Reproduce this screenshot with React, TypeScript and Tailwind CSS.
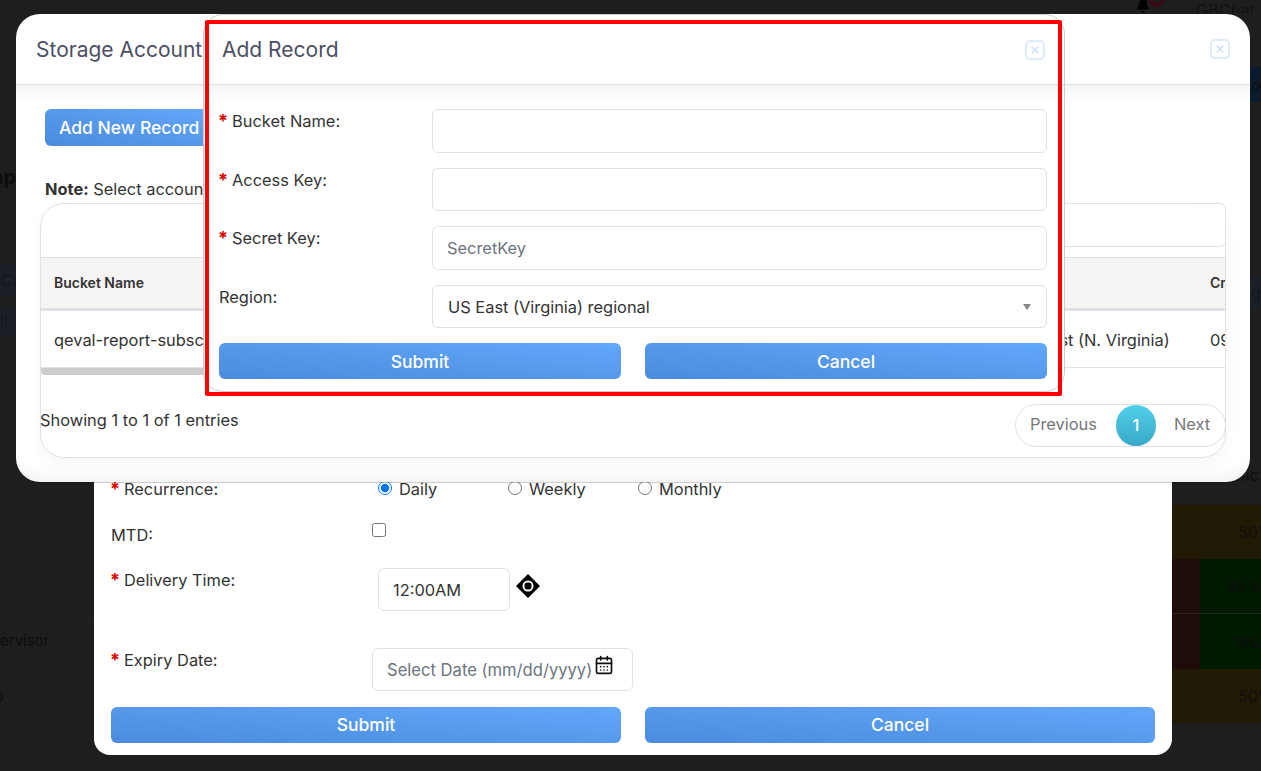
import React from 'react';
import { Bell, CalendarDays, X } from 'lucide-react';

const inputClass =
  'h-[43.5px] w-full rounded-md border border-[#dee2e6] bg-white px-[14px] text-[16.4px] text-[#333] placeholder:text-[#6c757d] outline-none';
const primaryButton =
  'rounded-md bg-linear-to-tr from-[#4a8bdc] to-[#62a8fb] text-[17.5px] leading-none font-medium text-white';

const Required: React.FC = () => (
  <span className="w-[13px] shrink-0 -translate-x-px text-[18px] leading-6 font-bold text-[#e00000]">*</span>
);

const CloseButton: React.FC = () => (
  <button className="flex h-5 w-5 items-center justify-center rounded-[5px] border-2 border-[#deebfb]">
    <X size={12} strokeWidth={3.5} className="text-[#cfe2fa]" />
  </button>
);

const FormRow: React.FC<{ label: string; required?: boolean; children: React.ReactNode }> = ({
  label,
  required,
  children,
}) => (
  <div className="mb-[15px] flex">
    <div className="flex w-[213px] shrink-0 leading-6">
      {required && <Required />}
      <span>{label}:</span>
    </div>
    <div className="flex-1">{children}</div>
  </div>
);

const RadioOption: React.FC<{ label: string; checked?: boolean }> = ({ label, checked }) => (
  <label className="flex w-[130px] items-start gap-[7px] leading-6">
    <input type="radio" name="recurrence" defaultChecked={checked} className="mt-[4px] h-[14px] w-[14px]" />
    {label}
  </label>
);

const MoveIcon: React.FC = () => (
  <svg width="24" height="24" viewBox="0 0 24 24" className="mt-[6px] ml-[6px] shrink-0">
    <path d="M12 0l7 7H5zM12 24l-7-7h14zM0 12l7-7v14zM24 12l-7 7V5z" fill="#000" />
    <circle cx="12" cy="12" r="8" fill="#000" />
    <circle cx="12" cy="12" r="5.5" fill="#fff" />
    <rect x="8.5" y="8.5" width="7" height="7" rx="2.5" fill="#000" />
  </svg>
);

// Dimmed page behind the modals, only its edges stay visible
const BackgroundPage: React.FC = () => (
  <div className="flex h-full flex-col text-[#0d0d0d]">
    <div className="flex h-[14px] shrink-0 items-start justify-end overflow-hidden">
      <div className="relative mr-[46px] -mt-[1px]">
        <Bell size={14} fill="#000" className="text-black" />
        <span className="absolute -top-[8px] left-[13px] h-[16px] w-[16px] rounded-full border-[4px] border-[#3a0a14] bg-[#1e1e1e]" />
      </div>
      <span className="-mt-[2px] mr-[6px] text-[16.4px] leading-6 text-[#111]">GBChat</span>
    </div>
    <div className="flex flex-1 justify-between">
      <div className="w-[94px] overflow-hidden">
        <div className="mt-[151px] flex w-4 justify-end overflow-hidden text-[20px] leading-6 font-bold">ap</div>
        <div className="mt-[76px] h-[31px] w-10 bg-[#1b2027] pl-px text-base leading-[31px] text-[#10161e]">Ca</div>
        <div className="mt-[10px] h-[31px] w-10 bg-[#1b2027] text-base leading-[31px] text-[#10161e]">ll</div>
        <div className="mt-[281px] border-t border-[#232323] pt-[10px] text-[15px] leading-6">ervisor</div>
        <div className="mt-[31px] -ml-[6px] text-base leading-6">o</div>
      </div>
      <div className="w-[89px] overflow-hidden text-base leading-6 whitespace-nowrap">
        <div className="mt-[53px] flex h-[35px] items-center justify-end bg-[#0b1a2c] text-[#0f0f0f]">o</div>
        <div className="mt-[175px] flex h-[31px] items-center justify-end bg-[#1b2027] text-[#10161e]">g</div>
        <div className="mt-[155px] h-6 pl-[64px]">ific</div>
        <div className="mt-[18px] flex h-[54px] items-center bg-[#211a05] pl-[66px] text-[#0f0f0f]">50%</div>
        <div className="flex h-[55px] border-b border-[#252525]">
          <div className="w-[28px] bg-[#1f0b09]" />
          <div className="flex flex-1 items-center overflow-hidden bg-[#001a00] pl-[26px]">98.8%</div>
        </div>
        <div className="flex h-[55px]">
          <div className="w-[28px] bg-[#1f0b09]" />
          <div className="flex flex-1 items-center overflow-hidden bg-[#001a00] pl-[33px]">100%</div>
        </div>
        <div className="flex h-[54px] items-center bg-[#211a05] pl-[66px] text-[#0f0f0f]">50%</div>
      </div>
    </div>
  </div>
);

const SubscriptionModal: React.FC = () => (
  <div className="absolute top-[440px] left-[94px] h-[315px] w-[1078px] rounded-b-2xl bg-white pt-[37px] pl-[17px] text-[16.4px] text-[#333]">
    <div className="flex h-6">
      <div className="flex w-[267px] shrink-0">
        <Required />
        <span>Recurrence:</span>
      </div>
      <RadioOption label="Daily" checked />
      <RadioOption label="Weekly" />
      <RadioOption label="Monthly" />
    </div>
    <div className="mt-[22px] flex h-6">
      <div className="w-[261px] shrink-0 leading-6">MTD:</div>
      <input type="checkbox" className="h-[14px] w-[14px]" />
    </div>
    <div className="mt-[21px] flex">
      <div className="flex w-[267px] shrink-0 leading-6">
        <Required />
        <span>Delivery Time:</span>
      </div>
      <input defaultValue="12:00AM" className={`${inputClass} !h-[43px] !w-[132px]`} />
      <MoveIcon />
    </div>
    <div className="mt-[37px] flex">
      <div className="flex w-[261px] shrink-0 leading-6">
        <Required />
        <span>Expiry Date:</span>
      </div>
      <div className="relative w-[261px]">
        <input placeholder="Select Date (mm/dd/yyyy)" className={`${inputClass} !h-[43px] !pr-0 !text-[16.6px]`} />
        <CalendarDays size={20} strokeWidth={2} className="absolute top-[7px] left-[222px] text-[#111]" />
      </div>
    </div>
    <div className="mt-4 flex gap-6">
      <button className={`${primaryButton} h-9 w-[510px]`}>Submit</button>
      <button className={`${primaryButton} h-9 w-[510px]`}>Cancel</button>
    </div>
  </div>
);

const StorageAccountModal: React.FC = () => (
  <div className="absolute top-[14px] left-4 h-[468px] w-[1234px] rounded-3xl bg-white text-[16.4px] text-[#333] shadow-[0_1px_0_rgba(0,0,0,0.2)]">
    <div className="flex h-[71px] items-center justify-between border-b border-[#dee2e6] px-5">
      <h2 className="pt-px text-[21px] text-[#4b4f63]">Storage Account</h2>
      <CloseButton />
    </div>
    <div className="h-[397px] rounded-b-3xl px-6 pt-6 shadow-[inset_0_24px_20px_-22px_rgba(0,0,0,0.08),inset_0_-24px_20px_-22px_rgba(0,0,0,0.08)]">
      <button className={`${primaryButton} ml-[5px] h-[37px] px-[14px] pt-px`}>Add New Record</button>
      <p className="mt-[31px] ml-[5px] leading-6">
        <b>Note:</b> Select account
      </p>
      <div className="mt-[2px] h-[255px] rounded-3xl border border-[#dee2e6] shadow-[0_6px_16px_rgba(0,0,0,0.04)]">
        <div className="flex justify-end">
          <input className="-mt-px -mr-px h-[44px] w-[400px] rounded-md border border-[#dee2e6] bg-white" />
        </div>
        <div className="mt-[10px] overflow-hidden">
          <div className="grid grid-cols-[958px_197px_400px] border-t border-b-[3px] border-[#dee2e6] bg-[#f6f5f3] text-sm leading-[50px] font-semibold text-[#333]">
            <div className="pl-[13px]">Bucket Name</div>
            <div className="pl-[14px]">Region</div>
            <div className="pl-[14px]">Created</div>
          </div>
          <div className="grid h-[57px] grid-cols-[958px_197px_400px] items-center border-b border-[#dee2e6] pt-[2px] whitespace-nowrap">
            <div className="pl-[13px]">qeval-report-subscription</div>
            <div className="pl-[14px]">US East (N. Virginia)</div>
            <div className="pl-[14px]">09/12/2024</div>
          </div>
        </div>
        <div className="h-[7px] w-[400px] rounded-bl-sm bg-[#cccccc]" />
        <div className="-mr-px flex items-start justify-between pt-[29px]">
          <span className="-ml-px mt-[4px] leading-6">Showing 1 to 1 of 1 entries</span>
          <div className="flex h-[43px] w-[211px] items-center rounded-full border border-[#e0e0e0] pl-[14px] text-[#777]">
            <span className="-mt-[3px]">Previous</span>
            <span className="mr-[18px] ml-[19px] flex h-[41px] w-10 items-center justify-center rounded-full bg-linear-to-b from-[#50d0ea] to-[#3aa8c8] font-medium text-white">
              1
            </span>
            <span className="-mt-[3px]">Next</span>
          </div>
        </div>
      </div>
    </div>
  </div>
);

const AddRecordModal: React.FC = () => (
  <div className="absolute top-[14px] left-[203px] h-[378px] w-[862px] rounded-[20px] border border-[#cccccc] bg-white text-[16.4px] text-[#333]">
    <div className="flex h-[70px] items-center justify-between border-b border-[#dee2e6] pr-[19px] pl-[18px]">
      <h2 className="text-[21px] text-[#4b4f63]">Add Record</h2>
      <CloseButton />
    </div>
    <div className="h-[306px] rounded-b-[20px] pt-6 pr-[17px] pl-[15px] shadow-[inset_0_24px_20px_-22px_rgba(0,0,0,0.08)]">
      <FormRow label="Bucket Name" required>
        <input className={inputClass} />
      </FormRow>
      <FormRow label="Access Key" required>
        <input className={inputClass} />
      </FormRow>
      <FormRow label="Secret Key" required>
        <input placeholder="SecretKey" className={inputClass} />
      </FormRow>
      <FormRow label="Region">
        <div className={`${inputClass} flex items-center justify-between pt-[2px] pr-[15px] pl-[15px]`}>
          <span>US East (Virginia) regional</span>
          <span className="h-0 w-0 border-x-[4px] border-t-[6px] border-x-transparent border-t-[#888]" />
        </div>
      </FormRow>
      <div className="mt-px flex gap-6">
        <button className={`${primaryButton} h-9 w-[402px] pt-[2px]`}>Submit</button>
        <button className={`${primaryButton} h-9 w-[402px] pt-[2px]`}>Cancel</button>
      </div>
    </div>
  </div>
);

export default function App() {
  return (
    <div className="relative h-[771px] w-[1261px] overflow-hidden bg-[#1e1e1e] font-['Inter',sans-serif]">
      <BackgroundPage />
      <SubscriptionModal />
      <StorageAccountModal />
      <AddRecordModal />
      {/* annotation box drawn on the screenshot */}
      <div className="pointer-events-none absolute top-[20px] left-[205px] h-[376px] w-[857px] rounded-[2px] border-[4.5px] border-[#ff0000]" />
    </div>
  );
}
